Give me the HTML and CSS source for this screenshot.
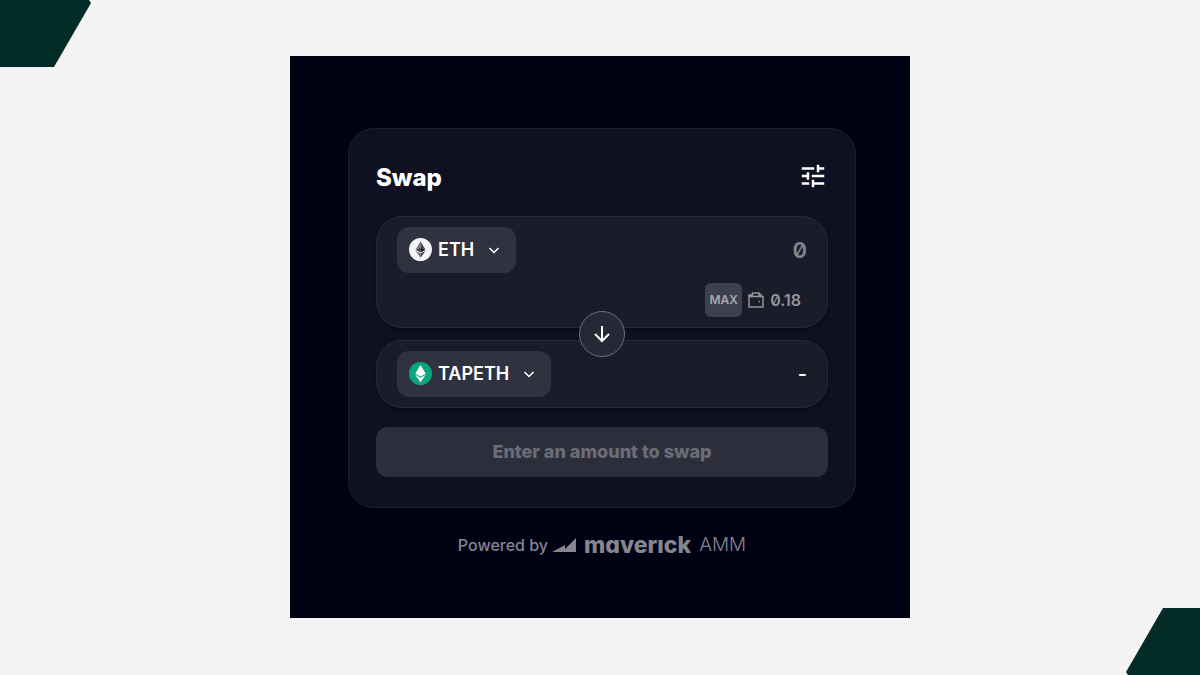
FILE: index.html
```html
<!DOCTYPE html>
<html lang="en">
<head>
    <meta charset="UTF-8">
    <meta name="viewport" content="width=device-width, initial-scale=1">
    <title>Swap</title>
    <link rel="stylesheet" href="styles.css">
</head>
<body>
    <div class="corner corner-top"></div>
    <div class="corner corner-bottom"></div>

    <main class="stage">
        <form class="card">
            <div class="card-head">
                <h1>Swap</h1>
                <button type="button" class="settings" aria-label="Settings">
                    <svg width="30" height="30" viewBox="0 0 24 24" fill="currentColor">
                        <path d="M3 17v2h6v-2H3zM3 5v2h10V5H3zm10 16v-2h8v-2h-8v-2h-2v6h2zM7 9v2H3v2h4v2h2V9H7zm14 4v-2H11v2h10zm-6-4h2V7h4V5h-4V3h-2v6z"/>
                    </svg>
                </button>
            </div>

            <!-- sell -->
            <div class="panel">
                <div class="row">
                    <button type="button" class="token">
                        <svg class="coin" viewBox="0 0 24 24">
                            <circle cx="12" cy="12" r="12" fill="#f4f4f6"/>
                            <path d="M12 3.5L6.8 12.2 12 10z" fill="#77777c"/>
                            <path d="M12 3.5l5.2 8.7L12 10z" fill="#45454b"/>
                            <path d="M6.8 12.2L12 10v5.2z" fill="#45454b"/>
                            <path d="M17.2 12.2L12 10v5.2z" fill="#18181d"/>
                            <path d="M6.8 13.3l5.2 3v4.2z" fill="#77777c"/>
                            <path d="M17.2 13.3l-5.2 3v4.2z" fill="#38383e"/>
                        </svg>
                        <span>ETH</span>
                        <svg class="arrow" viewBox="0 0 12 12"><path d="M1.500 4l4.500 4.500L10.500 4"/></svg>
                    </button>
                    <input class="amount" type="text" inputmode="decimal" placeholder="0" aria-label="Amount">
                </div>
                <div class="balance">
                    <button type="button" class="max">MAX</button>
                    <svg class="wallet" viewBox="0 0 16 16">
                        <path d="M1 4.5h14v10.5H1zM1 4.5V3h3M4.5 4.5V1h6.500v3.500M11 2.500h2v2"/>
                        <path d="M10.500 9.500h1.500"/>
                    </svg>
                    <span>0.18</span>
                </div>
            </div>

            <div class="between">
                <button type="button" class="flip" aria-label="Switch tokens">
                    <svg width="20" height="20" viewBox="0 0 20 20"><path d="M10 2v15M3 10l7 7 7-7"/></svg>
                </button>
            </div>

            <!-- buy -->
            <div class="panel">
                <div class="row">
                    <button type="button" class="token">
                        <svg class="coin" viewBox="0 0 24 24">
                            <circle cx="12" cy="12" r="12" fill="#0aa57c"/>
                            <path d="M12 3l5.500 9.200L12 15.200l-5.500-3z" fill="#fff"/>
                            <path d="M6.500 13.400l5.500 3 5.500-3L12 21z" fill="#fff"/>
                        </svg>
                        <span>TAPETH</span>
                        <svg class="arrow" viewBox="0 0 12 12"><path d="M1.500 4l4.500 4.500L10.500 4"/></svg>
                    </button>
                    <output class="result">-</output>
                </div>
            </div>

            <button type="submit" class="submit" disabled>Enter an amount to swap</button>
        </form>

        <footer class="powered">
            <span>Powered by</span>
            <svg class="mark" viewBox="0 0 24 14"><path d="M0 14L13 7v4L24 0v14z"/></svg>
            <span class="brand">maverıck</span>
            <span class="amm">AMM</span>
        </footer>
    </main>
</body>
</html>
```

FILE: styles.css
```css
*{box-sizing:border-box;}
body{
    display:flex;
    align-items:center;
    justify-content:center;
    min-height:100vh;
    margin:0;
    padding-bottom:2px;
    background-color:#f4f4f4;
    color:#fff;
    font-family:Inter, "Liberation Sans", sans-serif;
}
h1{margin:0;}
button,input{
    margin:0;
    padding:0;
    border:none;
    background:none;
    color:inherit;
    font-family:inherit;
}
button{cursor:pointer;}
svg{flex:none;}

/* page corners */
.corner{
    position:absolute;
    width:91px;
    height:67px;
    background-color:#032c27;
}
.corner-top{
    top:0;
    left:0;
    clip-path:polygon(0 0, 89px 0, 91px 3px, 54px 100%, 0 100%);
}
.corner-bottom{
    right:0;
    bottom:0;
    width:74px;
    clip-path:polygon(37px 0, 100% 0, 100% 100%, 2px 100%, 0 64px);
}

.stage{
    width:100%;
    max-width:620px;
    padding:72px 54px 60px 58px;
    background-color:#010114;
}
.card{
    padding:27px 27px 30px;
    border:1px solid #1e1f2d;
    border-radius:26px;
    background-color:#0f1021;
}
.card-head{
    display:flex;
    align-items:center;
    justify-content:space-between;
    height:40px;
    margin-bottom:20px;
}
.card-head h1{
    padding-top:4px;
    font-size:24px;
    font-weight:800;
    line-height:36px;
}
.settings{
    display:flex;
}

.panel{
    padding:10px 20px;
    border:1px solid #282936;
    border-radius:26px;
    background-color:#1b1c2a;
    box-shadow:0 2px 4px rgba(0,0,0,.3);
}
.row{
    display:flex;
    align-items:center;
    justify-content:space-between;
}
.token{
    display:flex;
    align-items:center;
    height:46px;
    padding:0 16px 0 12px;
    border-radius:12px;
    background-color:#313240;
    font-size:18px;
    font-weight:600;
}
.coin{
    width:23px;
    height:23px;
    margin-right:6px;
}
.arrow{
    width:12px;
    height:12px;
    margin-left:14px;
    fill:none;
    stroke:#fff;
    stroke-width:1.5;
}
.amount{
    flex:1;
    min-width:0;
    font-size:22px;
    font-weight:600;
    font-feature-settings:"zero";
    text-align:right;
    outline:none;
}
.amount::placeholder{
    color:#84858d;
    opacity:1;
}
.result{
    font-size:20px;
    font-weight:500;
}
.balance{
    display:flex;
    align-items:center;
    justify-content:flex-end;
    gap:6px;
    margin-top:10px;
    padding-right:6px;
    color:#94959c;
    font-size:16px;
    font-weight:600;
    font-feature-settings:"zero";
}
.max{
    width:37px;
    height:34px;
    border-radius:6px;
    background-color:#3f404d;
    color:#a7a8ae;
    font-size:12px;
    font-weight:600;
}
.wallet{
    width:16px;
    height:16px;
    fill:none;
    stroke:currentColor;
    stroke-width:1.5;
}

.between{
    position:relative;
    height:12px;
}
.flip{
    position:absolute;
    top:50%;
    left:50%;
    display:flex;
    align-items:center;
    justify-content:center;
    width:46px;
    height:46px;
    border:1px solid #6e6f79;
    border-radius:50%;
    background-color:#272836;
    transform:translate(-50%,-50%);
}
.flip path{
    fill:none;
    stroke:#fff;
    stroke-width:2;
}
.submit{
    display:block;
    width:100%;
    height:50px;
    margin-top:19px;
    border-radius:12px;
    background-color:#2d2e3c;
    color:#6b6c76;
    font-size:18px;
    font-weight:800;
    cursor:default;
}

.powered{
    display:flex;
    align-items:center;
    justify-content:center;
    height:26px;
    margin-top:24px;
    color:#84858f;
    font-size:16px;
    font-weight:500;
}
.mark{
    width:24px;
    height:14px;
    margin:0 8px 0 4px;
    fill:currentColor;
}
.brand{
    margin-right:8px;
    font-size:23px;
    font-weight:800;
    font-feature-settings:"cv11";
}
.amm{
    font-size:19px;
    font-weight:300;
}
```
